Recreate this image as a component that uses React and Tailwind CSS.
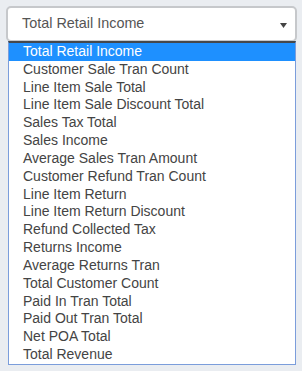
const options = [
  'Total Retail Income',
  'Customer Sale Tran Count',
  'Line Item Sale Total',
  'Line Item Sale Discount Total',
  'Sales Tax Total',
  'Sales Income',
  'Average Sales Tran Amount',
  'Customer Refund Tran Count',
  'Line Item Return',
  'Line Item Return Discount',
  'Refund Collected Tax',
  'Returns Income',
  'Average Returns Tran',
  'Total Customer Count',
  'Paid In Tran Total',
  'Paid Out Tran Total',
  'Net POA Total',
  'Total Revenue',
]

export default function App() {
  return (
    <div className="w-[302px] h-[371px] bg-[#eaedf1] pt-[6px] font-['Liberation_Sans',Arial,sans-serif] overflow-hidden">
      <div className="relative z-0 ml-[6px] w-[291px] h-[36px] bg-white border-2 border-[#c6c8cb] rounded-[5px] flex items-center pl-[14px] pr-[8px]">
        <span className="flex-1 text-[14.4px] text-[#555]">Total Retail Income</span>
        <svg width="7" height="5" viewBox="0 0 7 5" className="mt-[2px]">
          <path d="M0 0h7L3.5 5z" fill="#444" />
        </svg>
      </div>
      <div className="relative z-10 -mt-[1px] ml-[8px] w-[288px] bg-white border border-[#7b9ddb] border-t-2 border-t-[#45484c]">
        {options.map((o, i) => (
          <div
            key={o}
            className={`h-[17.84px] leading-[17.84px] pl-[14px] text-[14px] whitespace-nowrap ${
              i === 0 ? 'bg-[#1e90ff] text-white' : 'text-[#444]'
            }`}
          >
            {o}
          </div>
        ))}
      </div>
    </div>
  )
}
